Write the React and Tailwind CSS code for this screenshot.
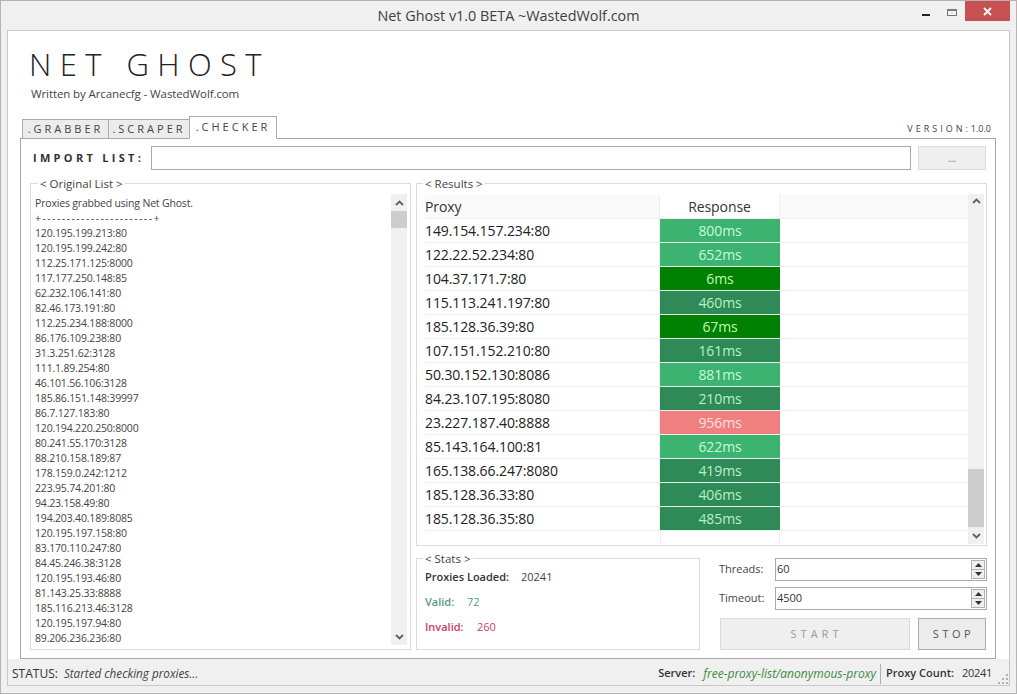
const originalList = [
  '120.195.199.213:80', '120.195.199.242:80', '112.25.171.125:8000', '117.177.250.148:85', '62.232.106.141:80',
  '82.46.173.191:80', '112.25.234.188:8000', '86.176.109.238:80', '31.3.251.62:3128', '111.1.89.254:80',
  '46.101.56.106:3128', '185.86.151.148:39997', '86.7.127.183:80', '120.194.220.250:8000', '80.241.55.170:3128',
  '88.210.158.189:87', '178.159.0.242:1212', '223.95.74.201:80', '94.23.158.49:80', '194.203.40.189:8085',
  '120.195.197.158:80', '83.170.110.247:80', '84.45.246.38:3128', '120.195.193.46:80', '81.143.25.33:8888',
  '185.116.213.46:3128', '120.195.197.94:80', '89.206.236.236:80',
];

const results = [
  ['149.154.157.234:80', '800ms', 'bg-[#3cb371] text-[#c8fbd8]'],
  ['122.22.52.234:80', '652ms', 'bg-[#3cb371] text-[#c8fbd8]'],
  ['104.37.171.7:80', '6ms', 'bg-[#008000] text-[#c0fbb0]'],
  ['115.113.241.197:80', '460ms', 'bg-[#2e8b57] text-[#b8f0c8]'],
  ['185.128.36.39:80', '67ms', 'bg-[#008000] text-[#c0fbb0]'],
  ['107.151.152.210:80', '161ms', 'bg-[#2e8b57] text-[#b8f0c8]'],
  ['50.30.152.130:8086', '881ms', 'bg-[#3cb371] text-[#c8fbd8]'],
  ['84.23.107.195:8080', '210ms', 'bg-[#2e8b57] text-[#b8f0c8]'],
  ['23.227.187.40:8888', '956ms', 'bg-[#f08080] text-[#fde0e0]'],
  ['85.143.164.100:81', '622ms', 'bg-[#3cb371] text-[#c8fbd8]'],
  ['165.138.66.247:8080', '419ms', 'bg-[#2e8b57] text-[#b8f0c8]'],
  ['185.128.36.33:80', '406ms', 'bg-[#2e8b57] text-[#b8f0c8]'],
  ['185.128.36.35:80', '485ms', 'bg-[#2e8b57] text-[#b8f0c8]'],
];

const Chevron = ({ down }) => (
  <svg width="9" height="6" viewBox="0 0 9 6" className="text-[#606060]">
    <path d={down ? 'M1 1l3.5 3.5L8 1' : 'M1 5l3.5-3.5L8 5'} fill="none" stroke="currentColor" strokeWidth="1.8" />
  </svg>
);

const Spinner = ({ label, value }) => (
  <div className="flex items-center h-[23px]">
    <span className="w-[56px] text-[11px] text-[#444]">{label}</span>
    <div className="w-[212px] h-[23px] border border-[#a9a9a9] flex items-center justify-between pl-[1px] pr-[1px] text-[11px] text-[#333]">
      <span>{value}</span>
      <div className="flex flex-col w-[14px] h-[19px] border border-[#b0b0b0] bg-[#eeeeee]">
        <div className="flex-1 flex items-center justify-center border-b border-[#b0b0b0]">
          <svg width="7" height="4" viewBox="0 0 7 4"><path d="M3.5 0L7 4H0z" fill="#333" /></svg>
        </div>
        <div className="flex-1 flex items-center justify-center">
          <svg width="7" height="4" viewBox="0 0 7 4"><path d="M0 0h7L3.5 4z" fill="#333" /></svg>
        </div>
      </div>
    </div>
  </div>
);

export default function App() {
  return (
    <div className="w-[1017px] h-[694px] overflow-hidden bg-[#f0f0f0] border border-[#b4b4b4] flex flex-col text-[#333] font-['Open_Sans',sans-serif]">
      {/* Title bar */}
      <div className="h-[29px] relative flex items-center justify-center text-[14.4px] text-[#3f3f3f] shrink-0">
        Net Ghost v1.0 BETA ~WastedWolf.com
        <div className="absolute top-0 right-[6px] flex items-start">
          <div className="w-[27px] h-[20px] flex justify-center items-center">
            <div className="w-[8px] h-[2px] bg-[#222] mt-[7px]" />
          </div>
          <div className="w-[26px] h-[20px] flex justify-center items-center">
            <div className="w-[10px] h-[7px] border border-[#777] border-t-2 mt-[3px]" />
          </div>
          <div className="w-[45px] h-[20px] bg-[#c75050] flex items-center justify-center">
            <svg width="9" height="9" viewBox="0 0 9 9"><path d="M1 1l7 7M8 1l-7 7" stroke="#fff" strokeWidth="1.8" /></svg>
          </div>
        </div>
      </div>

      {/* Client area */}
      <div className="flex-1 mx-[6px] mb-[7px] border border-[#c8c8c8] bg-white flex flex-col min-h-0">
        {/* Logo */}
        <div className="h-[85px] pl-[21px] pt-[15px] shrink-0">
          <div className="text-[31px] leading-[36px] font-light text-[#222] tracking-[8.4px] whitespace-pre">NET GHOST</div>
          <div className="text-[11.5px] leading-[15px] text-[#444] ml-[2px] mt-[4px] tracking-[-0.1px]">Written by Arcanecfg - WastedWolf.com</div>
        </div>

        {/* Tabs */}
        <div className="flex items-end h-[22px] pl-[14px] pr-[18px] shrink-0">
          <div className="w-[87px] h-[20px] -mb-[1px] bg-[#ececec] border border-[#ababab] flex items-center justify-center text-[11px] tracking-[3px] text-[#444]">.GRABBER</div>
          <div className="w-[82px] h-[20px] -mb-[1px] -ml-[1px] bg-[#ececec] border border-[#ababab] flex items-center justify-center text-[11px] tracking-[3px] text-[#444]">.SCRAPER</div>
          <div className="relative z-10 w-[88px] h-[23px] -mb-[1px] -ml-[1px] bg-white border border-[#ababab] border-b-white flex items-center justify-center text-[11px] tracking-[3px] text-[#444]">.CHECKER</div>
          <div className="ml-auto text-[9px] leading-[12px] mb-[3px] tracking-[3px] text-[#444]">VERSION:<span className="tracking-normal">1.0.0</span></div>
        </div>

        {/* Tab panel */}
        <div className="mx-[12px] mr-[13px] h-[521px] border border-[#a8a8a8] bg-white shrink-0 pl-[9px] pr-[7px] pt-[7px]">
          <div className="flex items-center h-[24px] pl-[3px]">
            <span className="w-[118px] text-[11px] font-bold tracking-[3.3px] text-[#333]">IMPORT LIST:</span>
            <div className="w-[760px] h-[24px] border border-[#a9a9a9]" />
            <div className="ml-[7px] w-[68px] h-[24px] bg-[#efefef] border border-[#dadada] flex items-center justify-center text-[10px] text-[#777]">...</div>
          </div>

          <div className="flex mt-[6px] gap-[5px]">
            {/* Original list */}
            <fieldset className="w-[381px] h-[474px] border border-[#dcdcdc] min-w-0 pl-[4px] flex flex-col">
              <legend className="ml-[3px] px-[2px] text-[11.5px] leading-[15px] text-[#444]">&lt; Original List &gt;</legend>
              <div className="flex flex-1 min-h-0">
                <div className="flex-1 text-[10.5px] leading-[15px] text-[#444] tracking-[-0.18px] mt-[5px] overflow-hidden">
                  <div>Proxies grabbed using Net Ghost.</div>
                  <div className="tracking-[1.45px]">+-----------------------+</div>
                  {originalList.map((line) => (
                    <div key={line}>{line}</div>
                  ))}
                </div>
                <div className="w-[16px] mr-[3px] mb-[4px] mt-[3px] bg-[#f0f0f0] flex flex-col items-center">
                  <div className="h-[17px] flex items-center"><Chevron /></div>
                  <div className="w-full h-[17px] bg-[#cdcdcd]" />
                  <div className="mt-auto h-[17px] flex items-center"><Chevron down /></div>
                </div>
              </div>
            </fieldset>

            <div className="w-[571px] flex flex-col">
              {/* Results */}
              <fieldset className="h-[370px] border border-[#dcdcdc] min-w-0 pl-[8px] flex flex-col">
                <legend className="-ml-[2px] px-[2px] text-[11.5px] leading-[15px] text-[#444]">&lt; Results &gt;</legend>
                <div className="flex flex-1 min-h-0">
                  <div className="flex-1 min-w-0 pt-[4px] text-[14px] tracking-[-0.1px]">
                    <div className="flex h-[24px] items-center border-b border-[#eeeeee] bg-[#fafafa] text-[14px] text-[#333]">
                      <div className="w-[235px] h-full flex items-center border-r border-[#eeeeee]">Proxy</div>
                      <div className="w-[120px] h-full bg-white flex items-center justify-center border-r border-[#eeeeee]">Response</div>
                    </div>
                    {results.map(([proxy, time, tone]) => (
                      <div key={proxy} className="flex h-[24px] border-b border-[#eeeeee] text-[#222]">
                        <div className="w-[235px] flex items-center border-r border-[#eeeeee]">{proxy}</div>
                        <div className={`w-[120px] flex items-center justify-center ${tone}`}>{time}</div>
                      </div>
                    ))}
                    <div className="ml-[235px] w-[120px] h-[14px] border-x border-[#eeeeee]" />
                  </div>
                  <div className="w-[16px] mr-[2px] mt-[3px] mb-[1px] bg-[#f0f0f0] flex flex-col items-center">
                    <div className="h-[14px] flex items-center"><Chevron /></div>
                    <div className="w-full h-[58px] mt-auto bg-[#cdcdcd]" />
                    <div className="h-[17px] flex items-center"><Chevron down /></div>
                  </div>
                </div>
              </fieldset>

              <div className="flex mt-[5px]">
                {/* Stats */}
                <fieldset className="w-[284px] h-[99px] border border-[#dcdcdc] min-w-0 pl-[8px] text-[11px]">
                  <legend className="-ml-[2px] px-[2px] text-[11.5px] leading-[15px] text-[#444]">&lt; Stats &gt;</legend>
                  <div className="flex h-[25px] items-center -mt-[1px]">
                    <span className="font-semibold text-[#333] w-[96px]">Proxies Loaded:</span>
                    <span className="text-[#444]">20241</span>
                  </div>
                  <div className="flex h-[25px] items-center text-[#5b9b80]">
                    <span className="font-semibold w-[42px]">Valid:</span>
                    <span>72</span>
                  </div>
                  <div className="flex h-[25px] items-center text-[#c8426a]">
                    <span className="font-semibold w-[52px]">Invalid:</span>
                    <span>260</span>
                  </div>
                </fieldset>

                {/* Controls */}
                <div className="flex-1 pl-[19px] pt-[7px] flex flex-col gap-[6px]">
                  <Spinner label="Threads:" value="60" />
                  <Spinner label="Timeout:" value="4500" />
                  <div className="flex gap-[8px] mt-[2px] pl-[1px]">
                    <div className="w-[190px] h-[32px] bg-[#efefef] border border-[#dadada] flex items-center justify-center pl-[3px] text-[11px] tracking-[4px] text-[#999]">START</div>
                    <div className="w-[68px] h-[32px] bg-[#ececec] border border-[#ababab] flex items-center justify-center pl-[3px] text-[11px] tracking-[3.5px] text-[#555]">STOP</div>
                  </div>
                </div>
              </div>
            </div>
          </div>
        </div>

        {/* Status bar */}
        <div className="flex-1 min-h-0 bg-[#f0f0f0] flex items-center pl-[4px] pt-[3px] text-[12px]">
          <span className="text-[#333]">STATUS:</span>
          <span className="ml-[6px] text-[11.7px] italic text-[#444]">Started checking proxies...</span>
          <span className="ml-auto text-[11px] font-semibold text-[#333]">Server:</span>
          <span className="ml-[8px] italic text-[#3c8a3c]">free-proxy-list/anonymous-proxy</span>
          <span className="ml-[4px] h-[20px] border-l border-[#b0b0b0]" />
          <span className="ml-[5px] text-[11px] font-semibold text-[#333]">Proxy Count:</span>
          <span className="ml-[8px] text-[11px] tracking-[-0.3px] text-[#333]">20241</span>
          <svg width="12" height="12" viewBox="0 0 12 12" className="ml-[5px] self-end mb-[1px]">
            <path d="M9 2h2v2H9zM5 6h2v2H5zM9 6h2v2H9zM1 10h2v2H1zM5 10h2v2H5zM9 10h2v2H9z" fill="#b0b0b0" />
          </svg>
        </div>
      </div>
    </div>
  );
}
